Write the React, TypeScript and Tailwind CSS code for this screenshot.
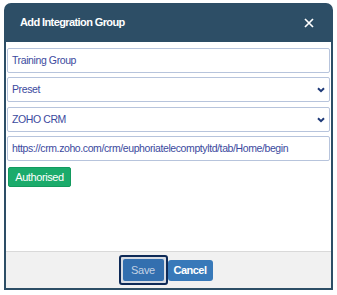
import { useState } from "react";

const font = { fontFamily: '"Liberation Sans", Arial, sans-serif' };

const Chevron = () => (
  <svg width="8" height="6" viewBox="0 0 8 6" className="shrink-0">
    <path d="M1 1.2 L4 4.2 L7 1.2" fill="none" stroke="#1f3a78" strokeWidth="2" />
  </svg>
);

const Field = ({ value, select }: { value: string; select?: boolean }) => (
  <div className="flex h-[25px] items-center justify-between rounded-[2px] border border-[#b7c4dc] bg-white pl-[4px] pr-[4px] text-[10.5px] tracking-[-0.4px] text-[#3b4a9e]">
    <span>{value}</span>
    {select && <Chevron />}
  </div>
);

export default function App() {
  const [name] = useState("Training Group");

  return (
    <div className="h-[295px] w-[337px] bg-white pl-[4px] pt-[3px]" style={font}>
      <div className="flex h-[287px] w-[329px] flex-col overflow-hidden rounded-t-[7px] bg-[#2d4e66]">
        <div className="flex h-[39px] shrink-0 items-center justify-between pl-[16px] pr-[19px]">
          <span className="text-[11px] font-bold tracking-[-0.6px] text-white">Add Integration Group</span>
          <svg width="10" height="10" viewBox="0 0 10 10">
            <path d="M1 1 L9 9 M9 1 L1 9" stroke="#ffffff" strokeWidth="1.7" />
          </svg>
        </div>
        <div className="mx-[2px] mb-[2px] flex flex-1 flex-col bg-white">
          <div className="flex flex-1 flex-col px-[1px] pt-[6px]">
            <Field value={name} />
            <div className="mt-[4px]">
              <Field value="Preset" select />
            </div>
            <div className="mt-[5px]">
              <Field value="ZOHO CRM" select />
            </div>
            <div className="mt-[4px]">
              <Field value="https://crm.zoho.com/crm/euphoriatelecomptyltd/tab/Home/begin" />
            </div>
            <div className="mt-[3px] pl-[1px]">
              <button className="h-[20px] w-[63px] rounded-[2px] border border-[#139a5e] bg-[#1bab6b] text-[11px] tracking-[-0.4px] text-white">
                Authorised
              </button>
            </div>
          </div>
          <div className="flex h-[37px] shrink-0 items-center justify-center border-t border-[#d9d9d9] bg-[#f1f1f1] pr-[6px]">
            <span className="rounded-[3px] border-2 border-[#0e2a57] bg-[#d6dbe3] px-[2px] py-[2px]">
              <button className="block h-[22px] w-[41px] rounded-[2px] bg-[#336faf] text-[11px] tracking-[-0.3px] text-[#c3d1e4]">
                Save
              </button>
            </span>
            <button className="h-[21px] w-[45px] rounded-[3px] bg-[#3879b9] text-[11px] font-bold tracking-[-0.5px] text-white">
              Cancel
            </button>
          </div>
        </div>
      </div>
    </div>
  );
}
